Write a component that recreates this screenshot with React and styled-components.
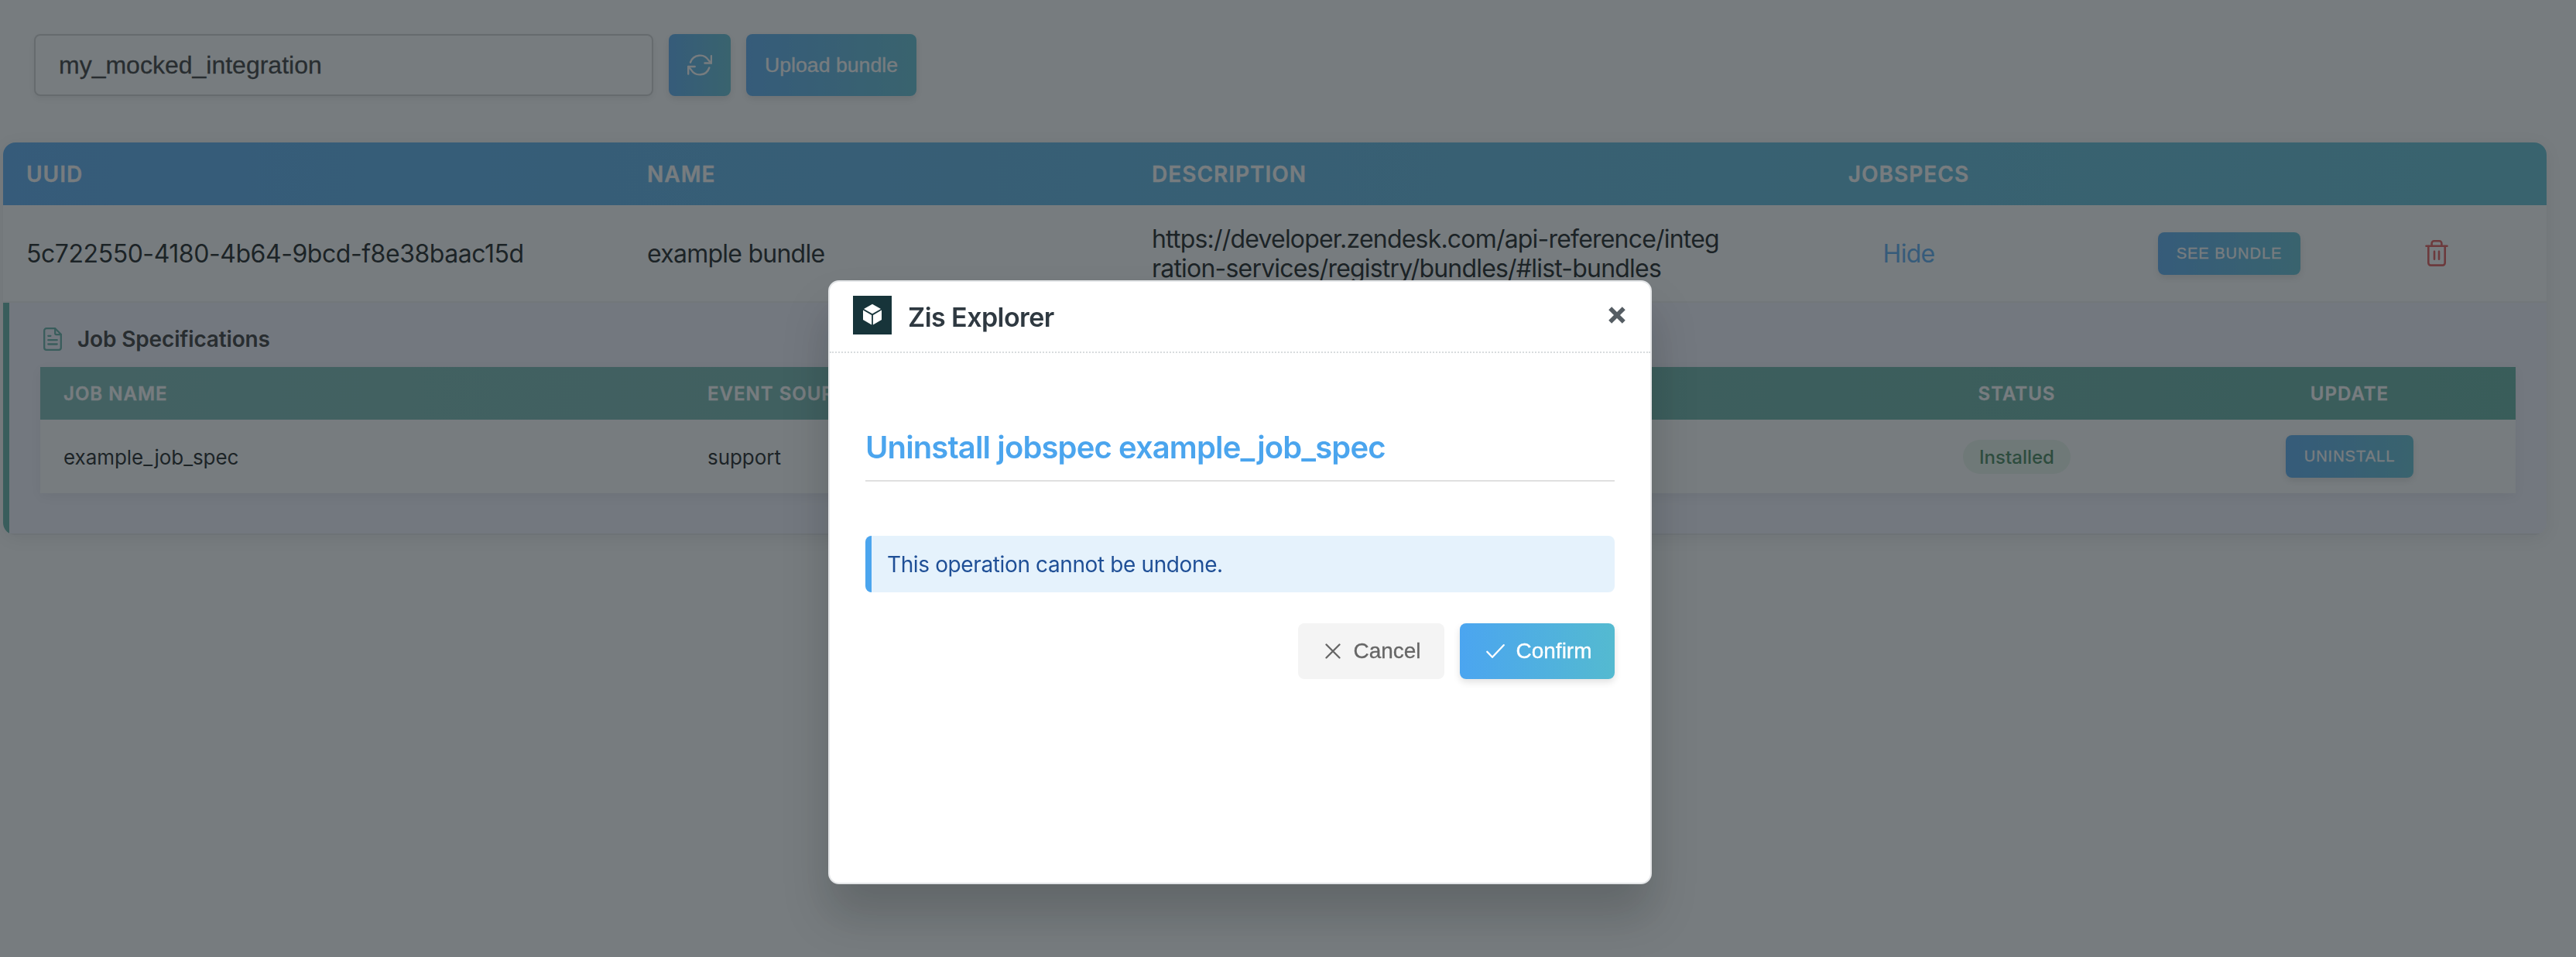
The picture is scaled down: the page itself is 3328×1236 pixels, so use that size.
import React from "react";
import styled, { createGlobalStyle, css } from "styled-components";

const sans = `Inter, "Liberation Sans", sans-serif`;
const control = `"Liberation Sans", Arial, sans-serif`;
const brand = "linear-gradient(90deg, #4ba5f0 0%, #54bad0 100%)";

const GlobalStyle = createGlobalStyle`
  * { box-sizing: border-box; }
  body { margin: 0; background: #ffffff; font-family: ${sans}; color: #05090b; overflow: hidden; }
  button, input { font-family: ${control}; border: 0; margin: 0; }
  svg { display: block; flex: none; }
`;

const Page = styled.main`
  height: 1236px;
  padding: 44px 38px 0 4px;
`;

const Toolbar = styled.div`
  display: flex;
  gap: 20px;
  padding-left: 40px;
  margin-bottom: 60px;
`;

const SearchInput = styled.input`
  width: 800px;
  height: 80px;
  padding: 0 30px;
  border: 2px solid #d0d0d0;
  border-radius: 8px;
  background: #ffffff;
  box-shadow: 0 4px 8px rgba(0, 0, 0, 0.08);
  font-size: 32px;
  color: #262626;
  -webkit-text-stroke: 0.3px;
`;

const Button = styled.button`
  display: inline-flex;
  align-items: center;
  justify-content: center;
  color: #ffffff;
  background: ${brand};
  border-radius: 8px;
  box-shadow: 0 4px 10px rgba(0, 0, 0, 0.12);
  white-space: nowrap;
  -webkit-text-stroke: 0.3px;
`;

const ToolButton = styled(Button)`
  height: 80px;
  width: ${(p) => p.$width}px;
  font-size: 26.67px;
`;

const SmallButton = styled(Button)`
  height: 55px;
  padding: 0 24px;
  font-size: 20px;
  letter-spacing: 1px;
  text-transform: uppercase;
`;

const Table = styled.section`
  border-radius: 16px;
  overflow: hidden;
  box-shadow: 0 4px 24px rgba(0, 0, 0, 0.1);
`;

const bundleColumns = css`
  display: grid;
  grid-template-columns: 801px 651px 796px 426px 404px 132px 1fr;
  align-items: center;
`;

const BundleHead = styled.div`
  ${bundleColumns}
  height: 81px;
  background: ${brand};
  color: #ffffff;
  font-size: 28px;
  font-weight: 600;
  letter-spacing: 1px;
  -webkit-text-stroke: 0.3px;
`;

const BundleRow = styled.div`
  ${bundleColumns}
  height: 126px;
  border-bottom: 2px solid #f0f0f0;
  background: #ffffff;
  font-size: 32px;
  line-height: 38px;
  letter-spacing: -0.75px;
`;

const Cell = styled.div`
  padding: ${(p) => p.$drop || 0}px ${(p) => (p.$center ? 0 : 32)}px 0;
  padding-left: ${(p) => p.$inset}px;
  display: ${(p) => (p.$center ? "flex" : "block")};
  justify-content: center;
  white-space: nowrap;
`;

const Uuid = styled.span`
  letter-spacing: -0.45px;
`;

const Description = styled.span`
  letter-spacing: -0.8px;
`;

const Link = styled.a`
  color: #4ba5f0;
`;

const Panel = styled.div`
  height: 300px;
  padding: 28px 40px 0;
  border-left: 8px solid #55a89d;
  border-bottom: 2px solid #e2e2e6;
  background: #f4f4ff;
`;

const PanelTitle = styled.h2`
  display: flex;
  align-items: center;
  gap: 20px;
  height: 38px;
  margin: 0 0 17px;
  padding-left: 4px;
  font-size: 28px;
  font-weight: 600;
  letter-spacing: -0.15px;
  color: #262626;
`;

const SpecCard = styled.div`
  background: #ffffff;
  box-shadow: 0 4px 16px rgba(0, 0, 0, 0.08);
`;

const specColumns = css`
  display: grid;
  grid-template-columns: 832px 1fr 431px 429px;
  align-items: center;
`;

const SpecHead = styled.div`
  ${specColumns}
  height: 68px;
  background: linear-gradient(90deg, #70b5b0 0%, #55a89a 100%);
  color: #ffffff;
  font-size: 24px;
  font-weight: 600;
  letter-spacing: 1px;
  -webkit-text-stroke: 0.3px;
`;

const SpecRow = styled.div`
  ${specColumns}
  height: 95px;
  font-size: 26px;
  letter-spacing: -0.05px;
`;

const SpecCell = styled(Cell)`
  padding-left: ${(p) => (p.$center ? 0 : 30)}px;
`;

const Badge = styled.span`
  display: inline-flex;
  align-items: center;
  height: 44px;
  padding: 1px 21px 0;
  border-radius: 24px;
  background: #e8f5ea;
  color: #347a4c;
  font-size: 24px;
  font-weight: 500;
  letter-spacing: 0;
`;

const Backdrop = styled.div`
  position: fixed;
  inset: 0;
  display: flex;
  align-items: flex-start;
  padding: 362px 0 0 1070px;
  background: rgba(42, 50, 55, 0.64);
`;

const Dialog = styled.div`
  width: 1064px;
  height: 780px;
  border: 2px solid #e4e6e8;
  border-radius: 14px;
  background: #ffffff;
  box-shadow: 0 40px 60px rgba(10, 13, 14, 0.2);
`;

const DialogHead = styled.header`
  display: flex;
  align-items: center;
  height: 92px;
  padding: 0 32px 4px 30px;
  border-bottom: 2px dotted #d8dcde;
  color: #2f3941;
`;

const DialogName = styled.span`
  flex: 1;
  margin-left: 21px;
  padding-top: 5px;
  font-size: 34px;
  font-weight: 600;
  letter-spacing: -0.55px;
`;

const DialogBody = styled.div`
  padding: 94px 46px 0;
`;

const DialogTitle = styled.h1`
  height: 72px;
  margin: 0 0 70px;
  border-bottom: 2px solid #e0e0e0;
  font-size: 40px;
  line-height: 56px;
  font-weight: 600;
  letter-spacing: -0.88px;
  color: #4ba5ee;
`;

const Notice = styled.div`
  height: 73px;
  padding-left: 20px;
  border-left: 8px solid #4ba5ee;
  border-radius: 8px;
  background: #e5f2fc;
  color: #1f4f96;
  font-size: 28px;
  line-height: 75px;
  letter-spacing: -0.38px;
`;

const Actions = styled.div`
  display: flex;
  justify-content: flex-end;
  gap: 20px;
  margin-top: 40px;
`;

const ActionButton = styled(Button)`
  width: ${(p) => p.$width}px;
  height: 72px;
  gap: ${(p) => p.$gap}px;
  padding-left: 11px;
  font-size: 28px;
  ${(p) =>
    p.$muted &&
    css`
      background: #f4f4f4;
      color: #666666;
      box-shadow: none;
    `}
`;

const Icon = ({ w, h, stroke = 2, children, color = "currentColor" }) => (
  <svg width={w} height={h} viewBox={`0 0 ${w} ${h}`} fill="none" stroke={color}
    strokeWidth={stroke} strokeLinecap="round" strokeLinejoin="round">
    {children}
  </svg>
);

const RefreshIcon = () => (
  <Icon w={32} h={28} stroke={2.4}>
    <path d="M4 10.5A13 13 0 0 1 27.5 8L31 11.5" />
    <path d="M31 2.2V11.5H22.5" />
    <path d="M28.3 17.5A13 13 0 0 1 4.8 20L1.2 16" />
    <path d="M1.2 25.5V16H9.7" />
  </Icon>
);

const DocumentIcon = () => (
  <Icon w={24} h={30} stroke={2.3} color="#55a89d">
    <path d="M4 1.2H15.2L22.8 8.8V26A2.8 2.8 0 0 1 20 28.8H4A2.8 2.8 0 0 1 1.2 26V4A2.8 2.8 0 0 1 4 1.2Z" />
    <path d="M15.2 1.5V7.6A1.6 1.6 0 0 0 16.8 9.2H22.6" />
    <path d="M6.3 10.8H9.4M6.3 16.2H17.7M6.3 21.5H17.7" />
  </Icon>
);

const TrashIcon = () => (
  <Icon w={30} h={34} stroke={2.6} color="#e04a48">
    <path d="M1.5 7.7H28.5" />
    <path d="M8.6 7.5V4.3A3 3 0 0 1 11.6 1.3H18.4A3 3 0 0 1 21.4 4.3V7.5" />
    <path d="M4.3 8V29.6A3 3 0 0 0 7.3 32.6H22.7A3 3 0 0 0 25.7 29.6V8" />
    <path d="M12 14.8V24.8M18 14.8V24.8" />
  </Icon>
);

const CloseIcon = () => (
  <svg width="22" height="22" viewBox="0 0 22 22" stroke="#555d63" strokeWidth="5.6">
    <path d="M2.2 2.2L19.8 19.8M19.8 2.2L2.2 19.8" />
  </svg>
);

const CubeLogo = () => (
  <svg width="50" height="50" viewBox="0 0 50 50">
    <rect width="50" height="50" fill="#17343a" />
    <g fill="#ffffff">
      <path d="M25 10.7L36 17L25 23.2L14 17Z" />
      <path d="M13 18.6L24.1 24.9V37.4L13 31Z" />
      <path d="M37 18.6L25.9 24.9V37.4L37 31Z" />
    </g>
  </svg>
);

export default function App() {
  return (
    <>
      <GlobalStyle />
      <Page>
        <Toolbar>
          <SearchInput defaultValue="my_mocked_integration" />
          <ToolButton $width={80} aria-label="Refresh"><RefreshIcon /></ToolButton>
          <ToolButton $width={220}>Upload bundle</ToolButton>
        </Toolbar>
        <Table>
          <BundleHead>
            <Cell $inset={30}>UUID</Cell>
            <Cell $inset={31}>NAME</Cell>
            <Cell>DESCRIPTION</Cell>
            <Cell $center $inset={2}>JOBSPECS</Cell>
          </BundleHead>
          <BundleRow>
            <Cell $inset={30} $drop={2}><Uuid>5c722550-4180-4b64-9bcd-f8e38baac15d</Uuid></Cell>
            <Cell $inset={31} $drop={2}>example bundle</Cell>
            <Cell $drop={2}>
              <Description>
                https://developer.zendesk.com/api-reference/integ
                <br />
                ration-services/registry/bundles/#list-bundles
              </Description>
            </Cell>
            <Cell $center $inset={2} $drop={2}><Link>Hide</Link></Cell>
            <Cell $center><SmallButton>See bundle</SmallButton></Cell>
            <Cell $center><TrashIcon /></Cell>
          </BundleRow>
          <Panel>
            <PanelTitle><DocumentIcon />Job Specifications</PanelTitle>
            <SpecCard>
              <SpecHead>
                <SpecCell>JOB NAME</SpecCell>
                <SpecCell>EVENT SOURCE</SpecCell>
                <SpecCell $center>STATUS</SpecCell>
                <SpecCell $center>UPDATE</SpecCell>
              </SpecHead>
              <SpecRow>
                <SpecCell $drop={2}>example_job_spec</SpecCell>
                <SpecCell $drop={2}>support</SpecCell>
                <SpecCell $center><Badge>Installed</Badge></SpecCell>
                <SpecCell $center><SmallButton>Uninstall</SmallButton></SpecCell>
              </SpecRow>
            </SpecCard>
          </Panel>
        </Table>
      </Page>
      <Backdrop>
        <Dialog>
          <DialogHead>
            <CubeLogo />
            <DialogName>Zis Explorer</DialogName>
            <CloseIcon />
          </DialogHead>
          <DialogBody>
            <DialogTitle>Uninstall jobspec example_job_spec</DialogTitle>
            <Notice>This operation cannot be undone.</Notice>
            <Actions>
              <ActionButton $muted $width={189} $gap={16}>
                <Icon w={20} h={20} stroke={2.3}><path d="M1.5 1.5L18.5 18.5M18.5 1.5L1.5 18.5" /></Icon>
                Cancel
              </ActionButton>
              <ActionButton $width={200} $gap={14}>
                <Icon w={24} h={20} stroke={2.3}><path d="M1.3 10.8L8 17.8L22.7 2.2" /></Icon>
                Confirm
              </ActionButton>
            </Actions>
          </DialogBody>
        </Dialog>
      </Backdrop>
    </>
  );
}
